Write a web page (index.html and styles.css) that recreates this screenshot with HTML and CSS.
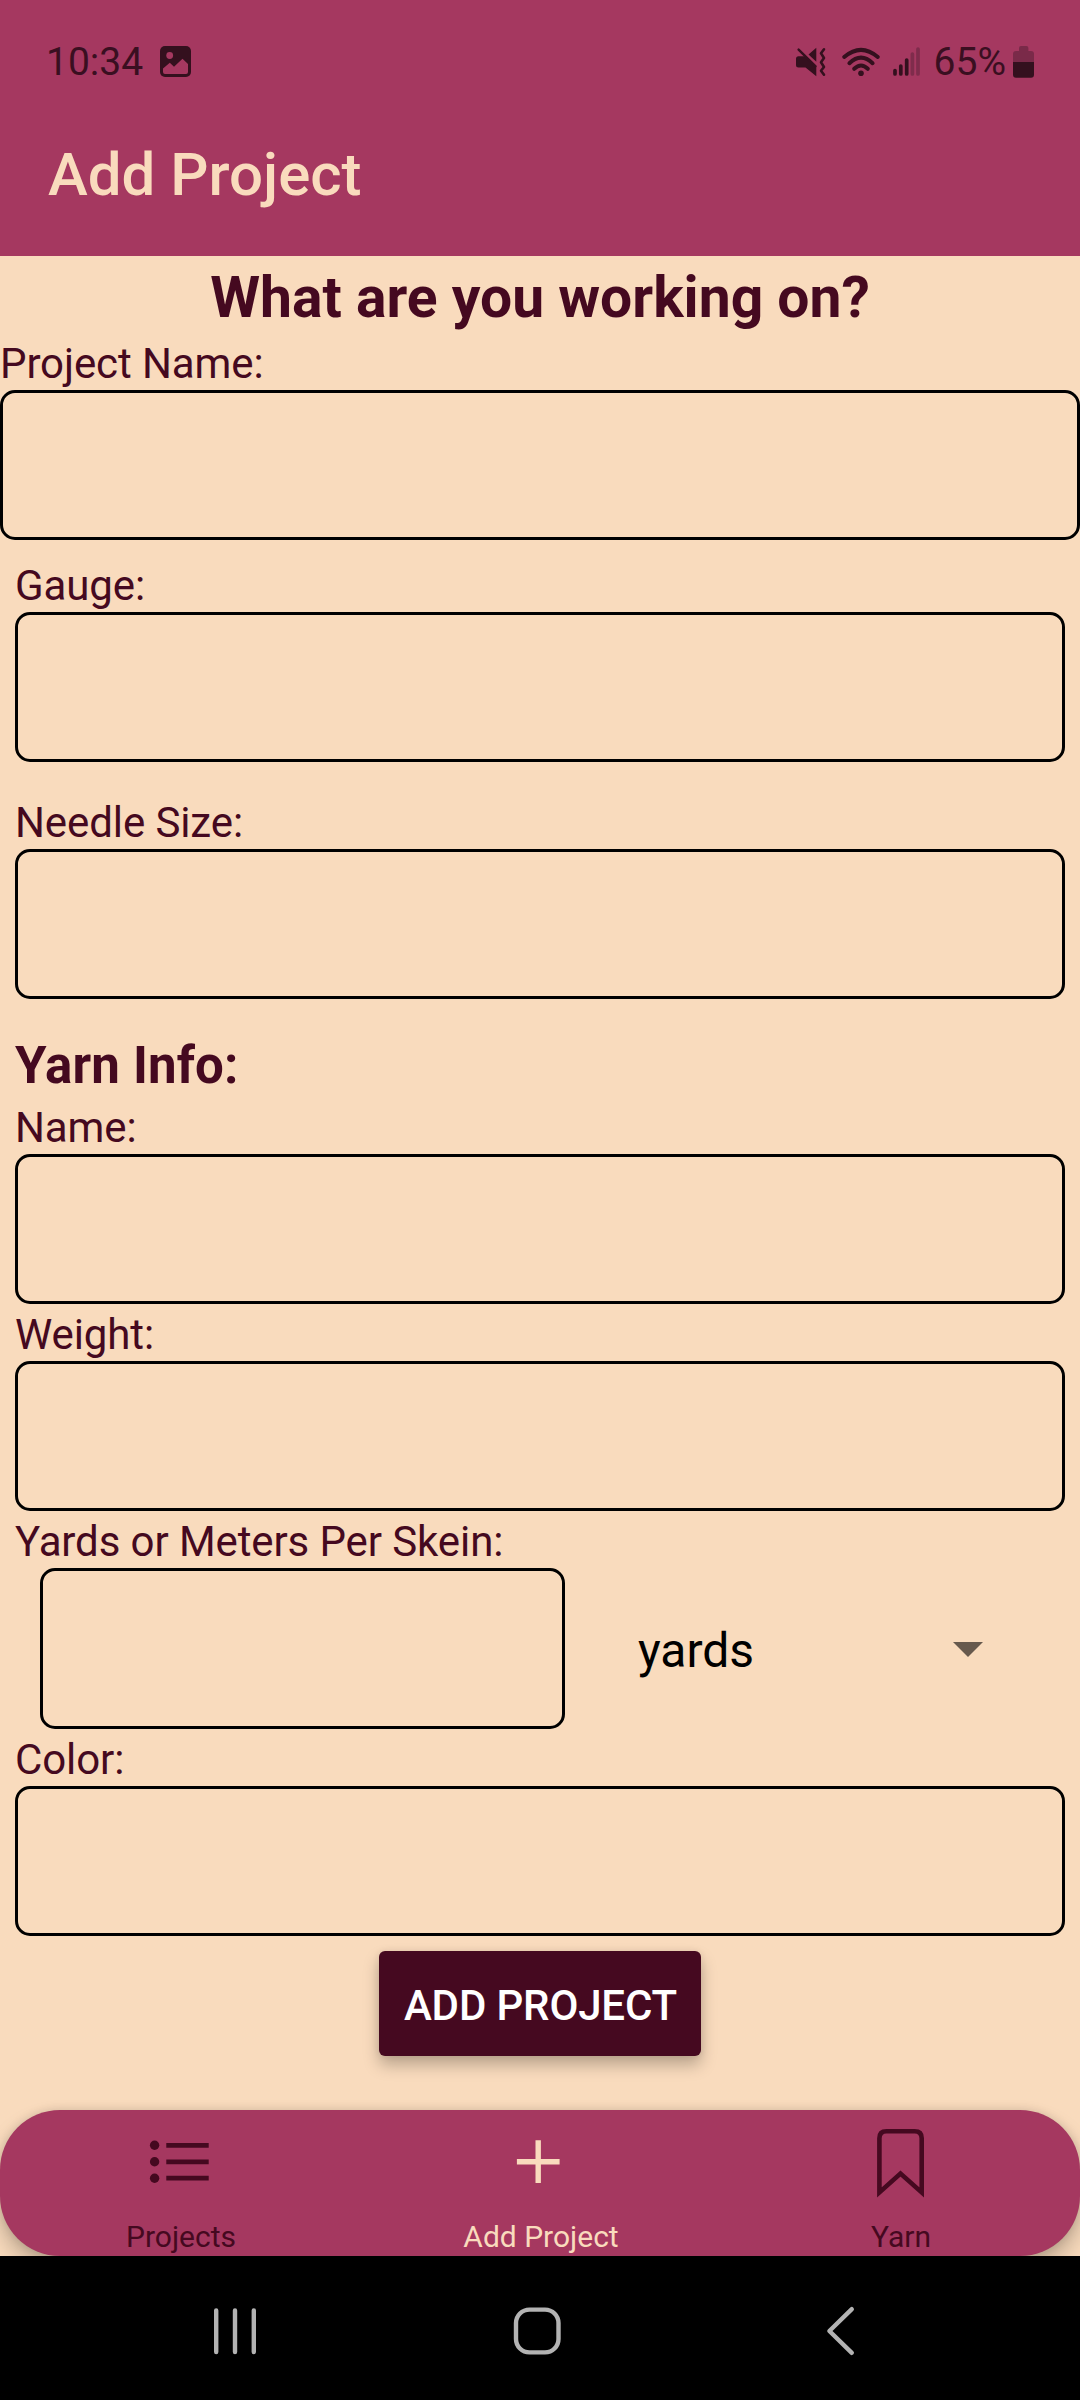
FILE: index.html
```html
<!DOCTYPE html>
<html lang="en">
<head>
<meta charset="utf-8">
<title>Add Project</title>
<link rel="stylesheet" href="styles.css">
</head>
<body>
<div class="app">
  <header class="header">
    <div class="status">
      <span class="status-text">10:34</span>
      <svg class="icon-photo" width="31" height="31" viewBox="0 0 31 31">
        <rect class="ink" width="31" height="31" rx="5"/>
        <circle class="cutout" cx="9.7" cy="9.5" r="3.4"/>
        <path class="cutout" d="M3 22.5L9.8 16.8L14 20.8L22.5 12.8L28 18V26Q28 28 26 28H5Q3 28 3 26Z"/>
      </svg>
      <span class="spacer"></span>
      <svg class="icon-mute" width="30" height="30" viewBox="0 0 30 30">
        <path class="ink" d="M20.3 .8V14.8L12.5 7.4ZM2.5 9.2H8.5L20.3 20.4V29.2L9.5 20.5H2.5Q0 20.5 0 18V11.7Q0 9.2 2.5 9.2Z"/>
        <path class="ink-line" stroke-width="2.4" d="M2.6 2.6L19.6 19.4"/>
        <path class="ink-line" stroke-width="2.6" stroke-linejoin="round" d="M28 2.3L25 6.3L28 11L25 15.3L28 20L25 23.7L28 27.7"/>
      </svg>
      <svg class="icon-wifi" width="39" height="30" viewBox="0 0 39 30">
        <path class="ink-line" stroke-width="4" d="M2.2 10Q19 -4.4 35.8 10M7.4 16.2Q19 5.2 30.6 16.2M12.2 21.8Q19 15.2 25.8 21.8"/>
        <circle class="ink" cx="19" cy="26.2" r="2.8"/>
      </svg>
      <svg class="icon-signal" width="27" height="30" viewBox="0 0 27 30">
        <path class="ink-line" stroke-width="3.7" d="M2 23.5V27M7.8 19V27M13.7 13V27"/>
        <path class="dim-line" stroke-width="3.7" d="M19.4 7V27M25 2V27"/>
      </svg>
      <span class="status-text">65%</span>
      <svg class="icon-battery" width="21" height="32" viewBox="0 0 21 32">
        <path class="dim" d="M6 5V2Q6 0 8 0H13.4Q15.4 0 15.4 2V5H18Q21 5 21 8V17H0V8Q0 5 3 5Z"/>
        <path class="ink" d="M0 16H21V28.7Q21 31.7 18 31.7H3Q0 31.7 0 28.7Z"/>
      </svg>
    </div>
    <div class="title">Add Project</div>
  </header>

  <main class="form">
    <h1 class="heading">What are you working on?</h1>
    <label class="label" for="project">Project Name:</label>
    <input class="input" id="project" type="text">
    <div class="inset">
      <div class="field field-gauge">
        <label class="label" for="gauge">Gauge:</label>
        <input class="input" id="gauge" type="text">
      </div>
      <div class="field field-needle">
        <label class="label" for="needle">Needle Size:</label>
        <input class="input" id="needle" type="text">
      </div>
      <h2 class="subheading">Yarn Info:</h2>
      <label class="label" for="yarn">Name:</label>
      <input class="input" id="yarn" type="text">
      <label class="label" for="weight">Weight:</label>
      <input class="input" id="weight" type="text">
      <label class="label" for="length">Yards or Meters Per Skein:</label>
      <div class="length-row">
        <input class="input input-length" id="length" type="text">
        <div class="picker">
          <span>yards</span>
          <svg class="caret" width="30" height="15" viewBox="0 0 30 15"><path d="M0 0H30L15 15Z"/></svg>
        </div>
      </div>
      <label class="label" for="color">Color:</label>
      <input class="input" id="color" type="text">
    </div>
    <button class="submit" type="button">ADD PROJECT</button>
  </main>

  <div class="tab-dock">
    <nav class="tabs">
      <a class="tab">
        <svg width="72" height="72" viewBox="0 0 72 72">
          <g fill="currentColor"><circle cx="10.6" cy="19.3" r="4.7"/><circle cx="10.6" cy="35.8" r="4.7"/><circle cx="10.6" cy="52.2" r="4.7"/></g>
          <path class="stroke" stroke-width="4.7" d="M22.3 19.4H64.7M22.3 35.8H64.7M22.3 52.2H64.7"/>
        </svg>
        <span class="tab-label">Projects</span>
      </a>
      <a class="tab tab-active">
        <svg width="72" height="72" viewBox="0 0 72 72">
          <path class="stroke" stroke-width="5.4" d="M12.9 35.8H55.6M34.2 14.3V57"/>
        </svg>
        <span class="tab-label">Add Project</span>
      </a>
      <a class="tab">
        <svg width="72" height="72" viewBox="0 0 72 72">
          <path class="stroke" stroke-width="4.6" d="M15.4 66.4V12.3Q15.4 5.3 22.4 5.3H50.7Q57.7 5.3 57.7 12.3V66.4L36.5 47.5Z"/>
        </svg>
        <span class="tab-label">Yarn</span>
      </a>
    </nav>
  </div>

  <footer class="system-nav">
    <svg width="48" height="48" viewBox="0 0 48 48"><path d="M5.2 3.5V45M24 3.5V45M42.8 3.5V45"/></svg>
    <svg width="48" height="48" viewBox="0 0 48 48"><rect x="3" y="2.6" width="42.5" height="42.8" rx="13.5"/></svg>
    <svg width="48" height="48" viewBox="0 0 48 48"><path d="M36.8 2.2L14.4 24L36.8 45.8"/></svg>
  </footer>
</div>
</body>
</html>
```
FILE: styles.css
```css
* { box-sizing: border-box; }

body {
  margin: 0;
  background: #f9dbbd;
  color: #450920;
  font-family: Roboto, sans-serif;
}

svg { display: block; flex: none; overflow: visible; }

.app {
  display: flex;
  flex-direction: column;
  width: 1080px;
  height: 2400px;
  overflow: hidden;
}

/* Header and status bar */
.header { height: 256px; background: #a53860; }

.status {
  display: flex;
  align-items: center;
  height: 123px;
  padding: 0 46px;
  color: #3a0f21;
}
.status-text { font-size: 39px; line-height: 46px; }
.spacer { flex: 1; }
.icon-photo { margin-left: 17px; }
.icon-mute { margin-right: 16px; }
.icon-wifi { margin-right: 12px; }
.icon-signal { margin-right: 14px; }
.icon-battery { margin-left: 7px; }
.ink { fill: #34101e; }
.cutout { fill: #a53860; }
.dim { fill: #7a2a49; }
.ink-line, .dim-line { fill: none; stroke: #34101e; stroke-linecap: round; }
.dim-line { stroke: #7f2c4c; }

.title {
  padding: 17px 48px 0;
  color: #f9dbbd;
  font-size: 60px;
  font-weight: 500;
  line-height: 70px;
}

/* Form */
.form { display: flex; flex-direction: column; height: 1854px; }

.heading {
  margin: 0;
  padding-top: 6px;
  font-size: 57px;
  font-weight: 700;
  line-height: 71px;
  text-align: center;
}
.subheading {
  margin: 29px 0 0;
  padding-top: 6px;
  font-size: 51px;
  font-weight: 700;
  letter-spacing: .15px;
  line-height: 63px;
}
.label {
  display: block;
  padding-top: 4px;
  font-size: 42px;
  letter-spacing: -.1px;
  line-height: 53px;
}
.input {
  display: block;
  width: 100%;
  height: 150px;
  padding: 0 30px;
  border: 3px solid #000;
  border-radius: 15px;
  background: transparent;
  font: 42px Roboto, sans-serif;
  outline: none;
}
.inset { padding: 0 15px; }
.field-gauge { margin-top: 15px; }
.field-needle { margin-top: 30px; }

.length-row { display: flex; padding-left: 25px; }
.input-length { flex: none; width: 525px; height: 161px; }
.picker {
  display: flex;
  flex: 1;
  align-items: center;
  justify-content: space-between;
  padding: 4px 82px 0 73px;
  color: #000;
  font-size: 48px;
  line-height: 56px;
}
.caret { margin-bottom: 3px; fill: #67594d; }

.submit {
  align-self: center;
  width: 322px;
  height: 105px;
  margin-top: 15px;
  padding: 4px 0 0 1px;
  border: 0;
  border-radius: 6px;
  background: #450920;
  box-shadow: 0 9px 16px rgba(0, 0, 0, .25), 0 0 7px rgba(0, 0, 0, .08);
  color: #fff;
  font: 500 42px/50px Roboto, sans-serif;
  letter-spacing: -.15px;
  white-space: nowrap;
}

/* Bottom tabs */
.tab-dock { height: 146px; }
.tabs {
  display: grid;
  grid-template-columns: repeat(3, 1fr);
  height: 146px;
  border-radius: 60px;
  background: #a53860;
  box-shadow: 0 12px 22px rgba(0, 0, 0, .24), 0 0 10px rgba(0, 0, 0, .12);
}
.tab {
  display: flex;
  flex-direction: column;
  align-items: center;
  gap: 21px;
  padding-top: 16px;
  font-size: 30px;
  line-height: 35px;
}
.tab-label { padding-left: 2px; }
.tab-active { color: #f9dbbd; }
.stroke { fill: none; stroke: currentColor; }

/* System navigation */
.system-nav {
  position: relative;
  display: flex;
  gap: 254px;
  height: 144px;
  padding: 51px 0 0 211px;
  background: #000;
}
.system-nav svg {
  fill: none;
  stroke: #b3b3b3;
  stroke-linecap: round;
  stroke-linejoin: round;
  stroke-width: 4.4;
}
```
